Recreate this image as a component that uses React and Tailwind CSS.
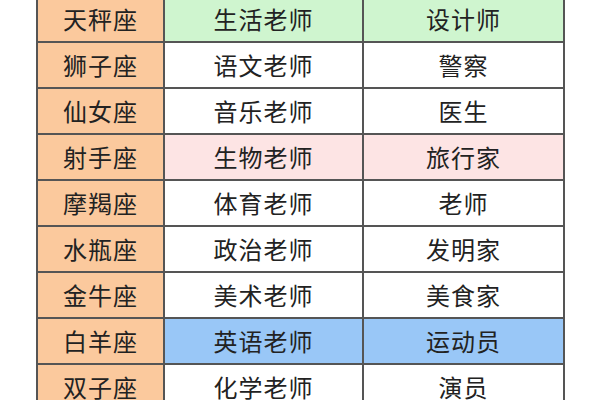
import React from "react";

const rows = [
  { sign: "天秤座", teacher: "生活老师", job: "设计师", bg: "bg-[#cff5cf]" },
  { sign: "狮子座", teacher: "语文老师", job: "警察", bg: "bg-white" },
  { sign: "仙女座", teacher: "音乐老师", job: "医生", bg: "bg-white" },
  { sign: "射手座", teacher: "生物老师", job: "旅行家", bg: "bg-[#fde4e4]" },
  { sign: "摩羯座", teacher: "体育老师", job: "老师", bg: "bg-white" },
  { sign: "水瓶座", teacher: "政治老师", job: "发明家", bg: "bg-white" },
  { sign: "金牛座", teacher: "美术老师", job: "美食家", bg: "bg-white" },
  { sign: "白羊座", teacher: "英语老师", job: "运动员", bg: "bg-[#99c7f7]" },
  { sign: "双子座", teacher: "化学老师", job: "演员", bg: "bg-white" },
];

export default function App() {
  return (
    <div
      className="w-[600px] h-[400px] overflow-hidden bg-white"
      style={{ fontFamily: '"Noto Sans CJK SC", "Noto Sans", sans-serif' }}
    >
      <table className="ml-[36px] -mt-[5px] border-collapse text-[24px] text-[#222] tracking-[1px]">
        <tbody>
          {rows.map((row, i) => (
            <tr key={i} className="h-[46px]">
              <td className="w-[127px] border-2 border-[#555] bg-[#fbc99d] text-center p-0">
                {row.sign}
              </td>
              <td className={`w-[199px] border-2 border-[#555] text-center p-0 ${row.bg}`}>
                {row.teacher}
              </td>
              <td className={`w-[201px] border-2 border-[#555] text-center p-0 ${row.bg}`}>
                {row.job}
              </td>
            </tr>
          ))}
        </tbody>
      </table>
    </div>
  );
}
